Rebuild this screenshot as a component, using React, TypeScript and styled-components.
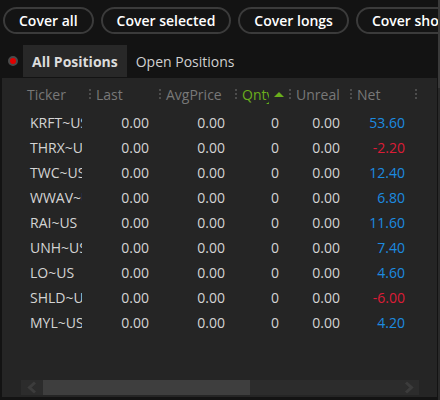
import { createGlobalStyle, styled } from 'styled-components';

const GlobalStyle = createGlobalStyle`
  html, body {
    margin: 0;
    padding: 0;
    background: #131313;
  }
  body {
    font-family: 'Open Sans', 'Noto Sans', sans-serif;
    font-size: 14px;
  }
`;

const Screen = styled.div`
  display: flex;
  width: 440px;
  height: 400px;
  overflow: hidden;
  background: #131313;
`;

const Main = styled.div`
  display: flex;
  flex-direction: column;
  width: 438px;
  flex-shrink: 0;
`;

const Rail = styled.div`
  width: 2px;
  background: linear-gradient(#3a3a3a 0 88px, #2a2a2a 88px);
`;

const Toolbar = styled.div`
  display: flex;
  gap: 7px;
  padding: 7px 0 0 3px;
  overflow: hidden;
  white-space: nowrap;
`;

const PillButton = styled.button`
  flex-shrink: 0;
  height: 27px;
  padding: 0 14px;
  border: 2px solid #3b3b3b;
  border-radius: 14px;
  background: #141414;
  color: #ffffff;
  font-family: inherit;
  font-size: 14px;
  font-weight: 600;
  line-height: 23px;
`;

const TabsRow = styled.div`
  display: flex;
  align-items: center;
  height: 32px;
  margin-top: 11px;
  padding-left: 8px;
`;

const StatusDot = styled.span`
  width: 6px;
  height: 6px;
  margin-right: 5px;
  border: 2px solid #4a4a4a;
  border-radius: 50%;
  background: #e00000;
`;

const Tab = styled.div<{ $active?: boolean }>`
  display: flex;
  align-items: center;
  height: 32px;
  padding: 0 9px;
  box-sizing: border-box;
  max-width: ${({ $active }) => ($active ? '104px' : 'none')};
  overflow: hidden;
  white-space: nowrap;
  background: ${({ $active }) => ($active ? '#282828' : 'transparent')};
  color: ${({ $active }) => ($active ? '#dcdcdc' : '#d0d0d0')};
  font-weight: ${({ $active }) => ($active ? 700 : 400)};
`;

const Panel = styled.div`
  display: flex;
  flex-direction: column;
  height: 319px;
  margin: 1px 1px 0 2px;
  background: #252525;
`;

const Grid = styled.div`
  display: grid;
  grid-template-columns: 69px 70px 76px 54px 61px 65px 1fr;
  padding-left: 18px;
`;

const HeaderRow = styled(Grid)`
  height: 32px;
  align-items: center;
`;

const HeaderCell = styled.div<{ $sep?: boolean; $sorted?: boolean }>`
  position: relative;
  display: flex;
  align-items: center;
  gap: 5px;
  padding-left: 7px;
  height: 20px;
  color: ${({ $sorted }) => ($sorted ? '#6aae1c' : '#787878')};
  white-space: nowrap;
  overflow: hidden;

  &::before {
    content: '';
    display: ${({ $sep }) => ($sep ? 'block' : 'none')};
    position: absolute;
    left: 0;
    top: 5px;
    width: 2px;
    height: 10px;
    background: repeating-linear-gradient(#4c4c4c 0 2px, transparent 2px 4px);
  }
`;

const SortLabel = styled.span`
  display: block;
  width: 27px;
  overflow: hidden;
`;

const SortArrow = styled.span`
  width: 0;
  height: 0;
  border-left: 5px solid transparent;
  border-right: 5px solid transparent;
  border-bottom: 5px solid #6aae1c;
`;

const Body = styled.div`
  flex: 1;
`;

const Row = styled(Grid)`
  height: 25px;
  line-height: 25px;
  color: #d4d4d4;
`;

const TickerCell = styled.div`
  margin-right: 7px;
  padding-left: 10px;
  overflow: hidden;
  white-space: nowrap;
`;

const NumCell = styled.div<{ $tone?: 'up' | 'down' }>`
  padding-right: 10px;
  text-align: right;
  color: ${({ $tone }) => ($tone === 'up' ? '#1c8be0' : $tone === 'down' ? '#dc1c36' : 'inherit')};
`;

const ScrollBar = styled.div`
  display: flex;
  height: 15px;
  margin: 0 18px 2px 19px;
  background: #2c2c2c;
`;

const ScrollButton = styled.div<{ $w: number }>`
  display: flex;
  align-items: center;
  justify-content: center;
  width: ${({ $w }) => $w}px;
  flex-shrink: 0;
`;

const ScrollThumb = styled.div`
  width: 207px;
  background: #3e3e3e;
`;

const ScrollSpace = styled.div`
  flex: 1;
`;

type Position = { ticker: string; net: number };

const positions: Position[] = [
  { ticker: 'KRFT~US', net: 53.6 },
  { ticker: 'THRX~US', net: -2.2 },
  { ticker: 'TWC~US', net: 12.4 },
  { ticker: 'WWAV~US', net: 6.8 },
  { ticker: 'RAI~US', net: 11.6 },
  { ticker: 'UNH~US', net: 7.4 },
  { ticker: 'LO~US', net: 4.6 },
  { ticker: 'SHLD~US', net: -6.0 },
  { ticker: 'MYL~US', net: 4.2 },
];

const Chevron = ({ dir }: { dir: 'left' | 'right' }) => (
  <svg width="12" height="13" viewBox="0 0 12 13">
    <path
      d={dir === 'left' ? 'M9 1.5 L3.5 6.5 L9 11.5' : 'M3 1.5 L8.5 6.5 L3 11.5'}
      fill="none"
      stroke="#3c3c3c"
      strokeWidth="3"
    />
  </svg>
);

export default function App() {
  return (
    <>
      <GlobalStyle />
      <Screen>
        <Main>
          <Toolbar>
            <PillButton>Cover all</PillButton>
            <PillButton>Cover selected</PillButton>
            <PillButton>Cover longs</PillButton>
            <PillButton>Cover shorts</PillButton>
          </Toolbar>

          <TabsRow>
            <StatusDot />
            <Tab $active>All Positions</Tab>
            <Tab>Open Positions</Tab>
          </TabsRow>

          <Panel>
            <HeaderRow>
              <HeaderCell>Ticker</HeaderCell>
              <HeaderCell $sep>Last</HeaderCell>
              <HeaderCell $sep>AvgPrice</HeaderCell>
              <HeaderCell $sep $sorted>
                <SortLabel>Qnty</SortLabel>
                <SortArrow />
              </HeaderCell>
              <HeaderCell $sep>Unreal</HeaderCell>
              <HeaderCell $sep>Net</HeaderCell>
              <HeaderCell $sep />
            </HeaderRow>

            <Body>
              {positions.map((p) => (
                <Row key={p.ticker}>
                  <TickerCell>{p.ticker}</TickerCell>
                  <NumCell>0.00</NumCell>
                  <NumCell>0.00</NumCell>
                  <NumCell>0</NumCell>
                  <NumCell>0.00</NumCell>
                  <NumCell $tone={p.net < 0 ? 'down' : 'up'}>{p.net.toFixed(2)}</NumCell>
                </Row>
              ))}
            </Body>

            <ScrollBar>
              <ScrollButton $w={22}>
                <Chevron dir="left" />
              </ScrollButton>
              <ScrollThumb />
              <ScrollSpace />
              <ScrollButton $w={20}>
                <Chevron dir="right" />
              </ScrollButton>
            </ScrollBar>
          </Panel>
        </Main>
        <Rail />
      </Screen>
    </>
  );
}
